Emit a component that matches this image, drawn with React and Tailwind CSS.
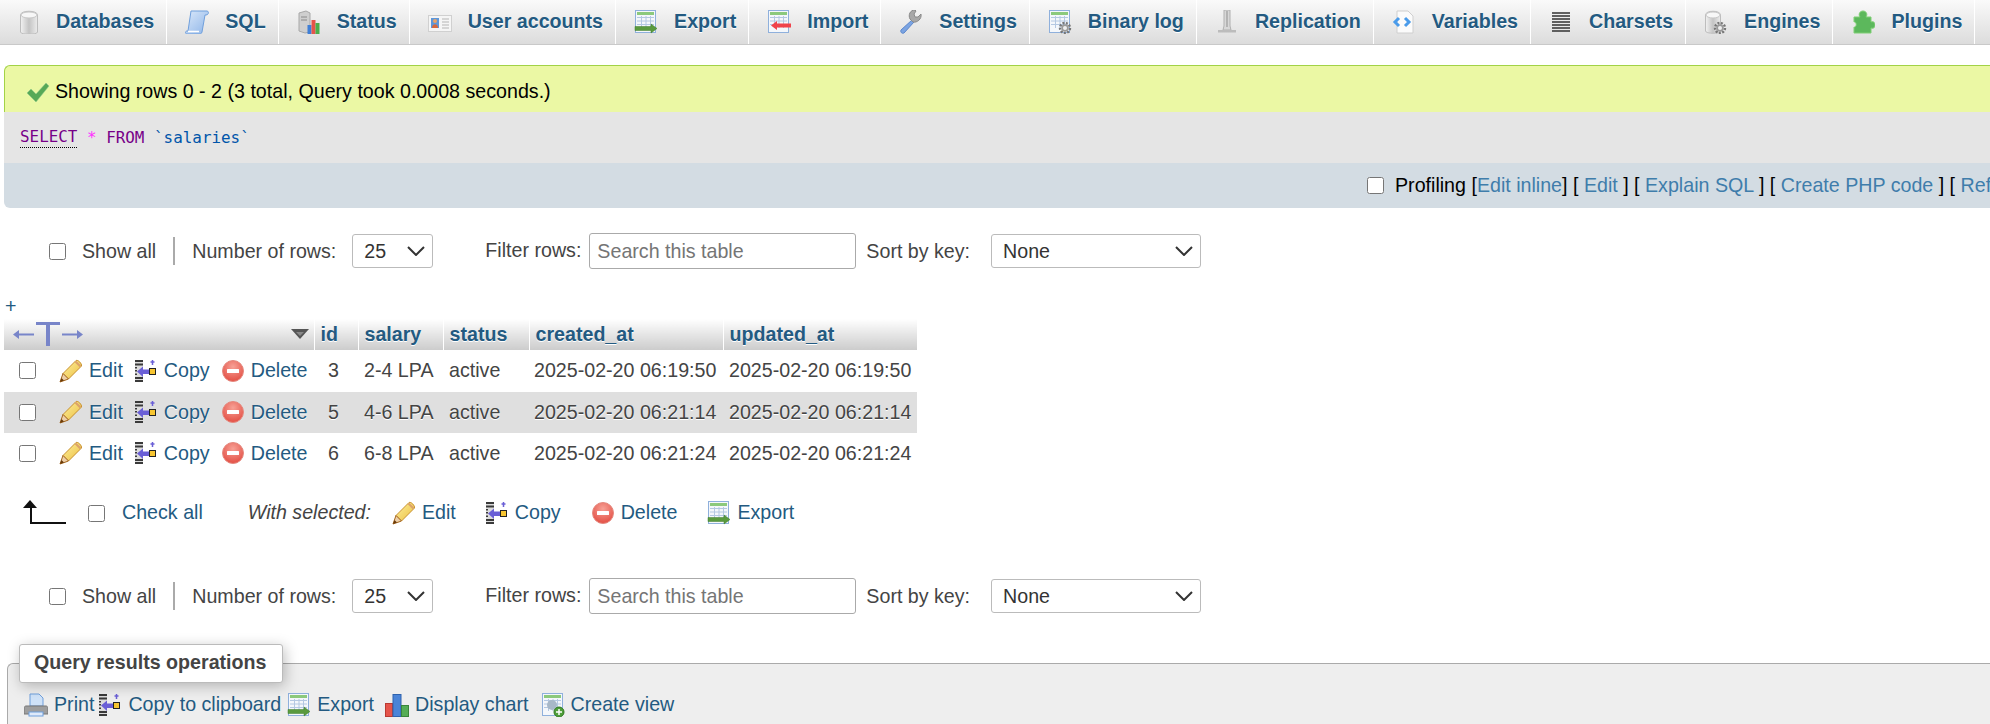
import React from "react";

// shared gradients for the little icons
const IconDefs = () => (
  <svg className="absolute w-0 h-0">
    <defs>
      <linearGradient id="gDb" x1="0" x2="1" y1="0" y2="0">
        <stop offset="0" stopColor="#f2f2f2" />
        <stop offset="0.5" stopColor="#c4c4c4" />
        <stop offset="1" stopColor="#ececec" />
      </linearGradient>
      <linearGradient id="gBlue" x1="0" x2="1" y1="0" y2="1">
        <stop offset="0" stopColor="#dbe9fa" />
        <stop offset="1" stopColor="#8db4e8" />
      </linearGradient>
      <radialGradient id="gRed" cx="0.5" cy="0.3" r="0.75">
        <stop offset="0" stopColor="#f7a196" />
        <stop offset="1" stopColor="#e2493e" />
      </radialGradient>
      <linearGradient id="gPencil" x1="0" x2="1" y1="0" y2="1">
        <stop offset="0" stopColor="#fdf0a0" />
        <stop offset="1" stopColor="#ecbf3f" />
      </linearGradient>
    </defs>
  </svg>
);

const Ico = ({ children, w = 24, h = 24, className = "" }) => (
  <svg width={w} height={h} viewBox={`0 0 ${w} ${h}`} className={`shrink-0 ${className}`}>
    {children}
  </svg>
);

const TableBase = () => (
  <>
    <rect x="1.5" y="0.5" width="20" height="22" fill="#f4f7fb" stroke="#8fb0dc" />
    <rect x="3" y="2" width="17" height="3" fill="#8cc97c" />
    <path d="M3 7.5h17M3 11h17M3 14.5h17M7.5 6v12M12 6v12M16.5 6v12" stroke="#b4c8e2" strokeWidth="1" fill="none" />
  </>
);

const DbIcon = () => (
  <Ico>
    <g transform="translate(3,0)">
      <path d="M1.500 5c0-5 17-5 17 0v17c0 3-17 3-17 0z" fill="url(#gDb)" stroke="#bdbdbd" />
      <ellipse cx="10" cy="5" rx="8" ry="3" fill="#f7f7f7" stroke="#c9c9c9" />
    </g>
  </Ico>
);
const SqlIcon = () => (
  <Ico>
    <path d="M6 1h16c2 0 2 4-1 4h-1l-3 17c-.5 2-2 2-3 2H2c-2 0-2-3 0-3h1z" fill="url(#gBlue)" stroke="#6f9fdc" />
    <path d="M3 21.500h11" stroke="#fff" strokeWidth="1.500" />
  </Ico>
);
const StatusIcon = () => (
  <Ico>
    <path d="M2 3l7-2 4 2v19l-5 1-6-2z" fill="#cfcfcf" stroke="#a8a8a8" />
    <path d="M4 7h6M4 10h6" stroke="#8a8a8a" />
    <rect x="10.500" y="15" width="4" height="9" fill="#3f7fd6" />
    <rect x="14.500" y="10" width="4" height="14" fill="#e5544a" />
    <rect x="18.500" y="13" width="4" height="11" fill="#4cae4c" />
  </Ico>
);
const UsersIcon = () => (
  <Ico>
    <rect x="0.500" y="5.500" width="23" height="16" fill="#f5f5f5" stroke="#d0d0d0" />
    <rect x="3" y="8" width="8" height="10" fill="#5d97da" />
    <circle cx="7" cy="11" r="2" fill="#e8a36a" />
    <path d="M4 18c0-5 6-5 6 0z" fill="#d5683e" />
    <path d="M14 9h7M14 12h7M14 15h7M14 18h7" stroke="#b5b5b5" />
  </Ico>
);
const ExportIcon = ({ w = 24 }) => (
  <Ico w={w}>
    <TableBase />
    <path d="M1 16.500h16v-2.500l6 4.500-6 4.500v-2.500H1z" fill="#5a9a3e" stroke="#3f7f2a" strokeWidth="0.500" />
  </Ico>
);
const ImportIcon = () => (
  <Ico>
    <TableBase />
    <path d="M24 13.500H10v-2.500l-6 4.500 6 4.500v-2.500h14z" fill="#f0434b" />
  </Ico>
);
const WrenchIcon = () => (
  <Ico>
    <path d="M13 11L2 21c-1 2 1 4 3 3l10-11z" fill="#7ba4e2" stroke="#5b86cc" transform="translate(0,-1)" />
    <path d="M12 11c-2-4 0-9 5-9l1 1-2 3 1 3 3 0 3-3c1 5-4 9-8 8z" fill="#a8a8a8" stroke="#8a8a8a" transform="translate(-1,-2)" />
  </Ico>
);
const Gear = ({ x, y, r = 5 }) => (
  <g>
    <circle cx={x} cy={y} r={r} fill="none" stroke="#777" strokeWidth="2.400" strokeDasharray="2 1.400" />
    <circle cx={x} cy={y} r={r - 1.2} fill="#9a9a9a" />
    <circle cx={x} cy={y} r={r - 3} fill="#eee" />
  </g>
);
const BinlogIcon = () => (
  <Ico>
    <TableBase />
    <Gear x={17} y={18} />
  </Ico>
);
const ReplicationIcon = () => (
  <Ico>
    <path d="M9 0h6v16l1 4H8l1-4z" fill="#d8d8d8" stroke="#b0b0b0" />
    <path d="M12 1v16" stroke="#8f8f8f" />
    <rect x="3" y="20" width="18" height="2.500" fill="#bcbcbc" />
  </Ico>
);
const VariablesIcon = () => (
  <Ico>
    <path d="M5 1h11l5 5v17H5z" fill="#fbfbfb" stroke="#cfcfcf" />
    <path d="M7 8l-4 4 4 4M13 8l4 4-4 4" fill="none" stroke="#4a9bea" strokeWidth="3" />
  </Ico>
);
const CharsetsIcon = () => (
  <Ico>
    <path d="M3 3h18M3 6h18M3 9h18M3 12h18M3 15h18M3 18h18M3 21h18" stroke="#333" strokeWidth="1.600" />
  </Ico>
);
const EnginesIcon = () => (
  <Ico>
    <path d="M1.500 5c0-5 15-5 15 0v16c0 3-15 3-15 0z" fill="url(#gDb)" stroke="#bdbdbd" />
    <ellipse cx="9" cy="5" rx="7" ry="3" fill="#f7f7f7" stroke="#c9c9c9" />
    <Gear x={16} y={18} />
  </Ico>
);
const PluginIcon = () => (
  <Ico>
    <path d="M3 7h6c-2-3 0-6 3-6s5 3 3 6h5v5c3-1 4 1 4 3s-1 4-4 3v5H3v-6c3 1 3-6 0-5z" fill="#5cb85c" stroke="#7ecf74" />
  </Ico>
);
const CheckIcon = () => (
  <Ico>
    <path d="M1 13l4-4 5 5L20 3l3 3-13 16z" fill="#57a957" stroke="#8fc98f" strokeWidth="0.500" />
  </Ico>
);
const PencilIcon = () => (
  <Ico>
    <path d="M4 14.500L17 1.500c2-1 6 3 5.500 5.500L9.500 20z" fill="url(#gPencil)" stroke="#c9912e" />
    <path d="M16.500 2.500l5 5" stroke="#dca36a" strokeWidth="2.200" />
    <path d="M4 14.500l5.500 5.500-8.500 3z" fill="#edcfa8" stroke="#a4661c" />
    <path d="M2.500 19l2.500 2.500-4 1.500z" fill="#6b3c0c" />
  </Ico>
);
const CopyIcon = () => (
  <Ico>
    <rect x="1" y="1" width="8" height="22" fill="#dcdcdc" />
    <path d="M1 1h8v2H1zM1 4.500h8v2H1zM1 18h8v2H1zM1 21h8v2H1zM1 8h2v1.500H1zM1 11h2v1.500H1zM1 14.500h2v1.500H1z" fill="#3a3a3a" />
    <path d="M3 12.500l6-5v3h6v4.500H9v3z" fill="#6a5fd6" />
    <rect x="15.500" y="9.500" width="6" height="6" fill="#f7c531" stroke="#222" />
    <path d="M18.500 1v5M16.500 3h4" stroke="#6a5fd6" strokeWidth="1.500" />
  </Ico>
);
const DeleteIcon = () => (
  <Ico>
    <circle cx="12" cy="12" r="10.500" fill="url(#gRed)" stroke="#e58a80" />
    <rect x="6" y="10" width="12" height="4" rx="0.500" fill="#fff" />
  </Ico>
);
const PrintIcon = () => (
  <Ico>
    <path d="M6 1h9l4 4v8H6z" fill="#cfe2f8" stroke="#6f9fdc" />
    <path d="M2 13h20c1 0 2 1 2 2v6H0v-6c0-1 1-2 2-2z" fill="#9e9e9e" stroke="#777" />
    <rect x="5" y="19" width="14" height="4" fill="#dfeafa" stroke="#6f9fdc" />
  </Ico>
);
const ChartIcon = () => (
  <Ico>
    <rect x="0.500" y="10.500" width="7" height="13" fill="#e5544a" stroke="#b93a32" />
    <rect x="8" y="1.500" width="8" height="22" fill="#4a84d8" stroke="#2e62ae" />
    <rect x="16.500" y="12.500" width="7" height="11" fill="#55ad55" stroke="#3a853a" />
  </Ico>
);
const ViewIcon = () => (
  <Ico>
    <TableBase />
    <circle cx="11" cy="12" r="5" fill="#a8b8c8" />
    <circle cx="18" cy="19" r="5" fill="#4f9e3a" stroke="#2f7a20" />
    <path d="M18 16v6M15 19h6" stroke="#fff" strokeWidth="1.500" />
  </Ico>
);
const ColumnArrows = () => (
  <svg width="70" height="24" viewBox="0 0 70 24" className="shrink-0">
    <g fill="#7885c9">
      <path d="M0 12.500l6-4.500v3.500h15v2H6v3.500z" />
      <path d="M23 0h24v3H37V24h-4V3H23z" />
      <path d="M70 12.500l-6-4.500v3.500H49v2h15v3.500z" />
    </g>
  </svg>
);
const ReturnArrow = () => (
  <svg width="43" height="24" viewBox="0 0 43 24" className="shrink-0 mb-[2px]">
    <path d="M7 0l7 8H9v14h34v2H7V8H0z" fill="#111" />
  </svg>
);
const Chevron = () => (
  <svg width="18" height="10" viewBox="0 0 18 10" className="absolute right-[8px] top-1/2 -translate-y-1/2 pointer-events-none">
    <path d="M1 1l8 8 8-8" fill="none" stroke="#333" strokeWidth="2" />
  </svg>
);

const tabs = [
  ["Databases", DbIcon],
  ["SQL", SqlIcon],
  ["Status", StatusIcon],
  ["User accounts", UsersIcon],
  ["Export", ExportIcon],
  ["Import", ImportIcon],
  ["Settings", WrenchIcon],
  ["Binary log", BinlogIcon],
  ["Replication", ReplicationIcon],
  ["Variables", VariablesIcon],
  ["Charsets", CharsetsIcon],
  ["Engines", EnginesIcon],
  ["Plugins", PluginIcon],
];

const rows = [
  ["3", "2-4 LPA", "active", "2025-02-20 06:19:50", "h-[42px] bg-white"],
  ["5", "4-6 LPA", "active", "2025-02-20 06:21:14", "h-[41px] bg-[#dfdfdf]"],
  ["6", "6-8 LPA", "active", "2025-02-20 06:21:24", "h-[41px] bg-white"],
];

const Select = ({ value, className }) => (
  <div className={`relative h-[34px] shrink-0 ${className}`}>
    <select
      defaultValue={value}
      className="appearance-none w-full h-full pl-[11px] pt-[1px] bg-white border border-[#bbb] rounded-[3px] text-[#333]"
    >
      <option>{value}</option>
    </select>
    <Chevron />
  </div>
);

const OptionsRow = () => (
  <div className="flex items-center h-[36px] pl-[49px] text-[#444]">
    <input type="checkbox" className="shrink-0 w-[17px] h-[17px] m-0" />
    <span className="ml-[16px] pt-[2px]">Show all</span>
    <span className="ml-[17px] w-[2px] h-[28px] bg-[#aaa]" />
    <span className="ml-[17px] pt-[2px]">Number of rows:</span>
    <Select value="25" className="ml-[16px] w-[81px]" />
    <span className="ml-[52px]">Filter rows:</span>
    <input
      placeholder="Search this table"
      className="ml-[8px] w-[267px] h-[36px] px-[7px] border border-[#aaa] rounded-[3px] placeholder:text-[#757575] outline-none"
    />
    <span className="ml-[10px] pt-[2px]">Sort by key:</span>
    <Select value="None" className="ml-[21px] w-[210px]" />
  </div>
);

const RowLink = ({ icon: Icon, label, className = "" }) => (
  <a className={`flex items-center gap-[6px] text-[#235a81] ${className}`}>
    <Icon />
    {label}
  </a>
);

const th = "border-r border-white bg-gradient-to-b from-white to-[#cccccc] text-left font-bold leading-[24px] text-[#235a81] [text-shadow:0_1px_0_#fff] pl-[6px] pb-[2px]";

export default function App() {
  return (
    <div className="relative w-[1990px] h-[724px] overflow-hidden bg-white text-[19.65px] text-[#444] font-['Liberation_Sans',Arial,sans-serif] whitespace-nowrap">
      <IconDefs />

      {/* top menu */}
      <nav className="flex h-[45px] bg-gradient-to-b from-[#fafafa] to-[#dcdcdc] border-b border-[#c9c9c9]">
        {tabs.map(([label, Icon]) => (
          <a key={label} className="flex items-center pl-[18px] first:pl-[16px] pr-[12px] border-r border-white font-bold text-[#235a81] [text-shadow:0_1px_0_#fff]">
            <Icon />
            <span className="ml-[16px]">{label}</span>
          </a>
        ))}
      </nav>

      {/* result message and query */}
      <div className="mt-[20px] ml-[4px]">
        <div className="flex items-center h-[47px] pl-[21px] pt-[6px] bg-[#ebf8a4] border-t border-[#a2d246] border-l rounded-tl-[6px] text-black">
          <CheckIcon />
          <span className="ml-[5px]">Showing rows 0 - 2 (3 total, Query took 0.0008 seconds.)</span>
        </div>
        <div className="flex items-center h-[51px] pl-[16px] bg-[#e5e5e5] font-['DejaVu_Sans_Mono',monospace] text-[15.9px]">
          <span className="text-[#770088] border-b border-dotted border-black leading-[20px]">SELECT</span>
          <span className="text-[#ff33ff] ml-[9.600px]">*</span>
          <span className="text-[#770088] ml-[9.600px]">FROM</span>
          <span className="text-[#0055aa] ml-[9.600px]">`salaries`</span>
        </div>
        <div className="flex items-center h-[45px] pl-[1363px] bg-[#d3dce3] rounded-bl-[6px] text-black">
          <input type="checkbox" className="shrink-0 w-[17px] h-[17px] m-0" />
          <span className="ml-[11px]">
            Profiling [<a className="text-[#3f7dab]">Edit inline</a>] [ <a className="text-[#3f7dab]">Edit</a> ] [ <a className="text-[#3f7dab]">Explain SQL</a> ] [ <a className="text-[#3f7dab]">Create PHP code</a> ] [ <a className="text-[#3f7dab]">Refresh</a> ]
          </span>
        </div>
      </div>

      <div className="mt-[25px]">
        <OptionsRow />
      </div>

      <div className="mt-[25px] ml-[5px] h-[25px] leading-[25px] text-[#235a81]">+</div>

      {/* results table */}
      <table className="ml-[4px] w-[913px] table-fixed border-collapse">
        <colgroup>
          <col className="w-[310px]" />
          <col className="w-[44px]" />
          <col className="w-[85px]" />
          <col className="w-[86px]" />
          <col className="w-[194px]" />
          <col className="w-[194px]" />
        </colgroup>
        <thead>
          <tr className="h-[31px]">
            <th className={th}>
              <div className="flex items-center justify-between pl-[3px] pr-[5px]">
                <ColumnArrows />
                <svg width="18" height="10" viewBox="0 0 18 10">
                  <path d="M0 0h18L9 10z" fill="#555" />
                  <path d="M5 3h8L9 7z" fill="#888" />
                </svg>
              </div>
            </th>
            <th className={th}>id</th>
            <th className={th}>salary</th>
            <th className={th}>status</th>
            <th className={th}>created_at</th>
            <th className={`${th} border-r-0`}>updated_at</th>
          </tr>
        </thead>
        <tbody>
          {rows.map(([id, salary, status, date, rowClass]) => (
            <tr key={id} className={`${rowClass} [text-shadow:0_1px_0_#fff]`}>
              <td>
                <div className="flex items-center pl-[15px]">
                  <input type="checkbox" className="shrink-0 w-[17px] h-[17px] m-0" />
                  <RowLink icon={PencilIcon} label="Edit" className="ml-[23px]" />
                  <RowLink icon={CopyIcon} label="Copy" className="ml-[11px]" />
                  <RowLink icon={DeleteIcon} label="Delete" className="ml-[11px]" />
                </div>
              </td>
              <td className="text-right pr-[19px]">{id}</td>
              <td className="pl-[6px]">{salary}</td>
              <td className="pl-[6px]">{status}</td>
              <td className="pl-[5px]">{date}</td>
              <td className="pl-[6px]">{date}</td>
            </tr>
          ))}
        </tbody>
      </table>

      {/* with selected */}
      <div className="flex items-center h-[24px] mt-[27px] pl-[23px]">
        <ReturnArrow />
        <input type="checkbox" className="shrink-0 ml-[22px] w-[17px] h-[17px] m-0" />
        <a className="ml-[17px] text-[#235a81]">Check all</a>
        <em className="ml-[45px]">With selected:</em>
        <RowLink icon={PencilIcon} label="Edit" className="ml-[21px]" />
        <RowLink icon={CopyIcon} label="Copy" className="ml-[29px]" />
        <RowLink icon={DeleteIcon} label="Delete" className="ml-[30px]" />
        <RowLink icon={ExportIcon} label="Export" className="ml-[30px]" />
      </div>

      <div className="mt-[53px]">
        <OptionsRow />
      </div>

      {/* query results operations */}
      <div className="relative mt-[49px] ml-[7px] h-[70px] pt-[29px] pl-[16px] bg-[#eeeeee] border-t border-l border-[#aaa] rounded-tl-[6px]">
        <div className="absolute left-[11px] -top-[20px] flex items-center h-[39px] w-[264px] pl-[14px] pb-[2px] bg-white border border-[#bbb] rounded-[3px] shadow-[2px_3px_14px_rgba(0,0,0,0.25)] font-bold">
          Query results operations
        </div>
        <div className="flex items-center h-[24px]">
          <RowLink icon={PrintIcon} label="Print" />
          <RowLink icon={CopyIcon} label="Copy to clipboard" className="ml-[4px]" />
          <RowLink icon={ExportIcon} label="Export" className="ml-[6px]" />
          <RowLink icon={ChartIcon} label="Display chart" className="ml-[11px]" />
          <RowLink icon={ViewIcon} label="Create view" className="ml-[12px]" />
        </div>
      </div>
    </div>
  );
}
